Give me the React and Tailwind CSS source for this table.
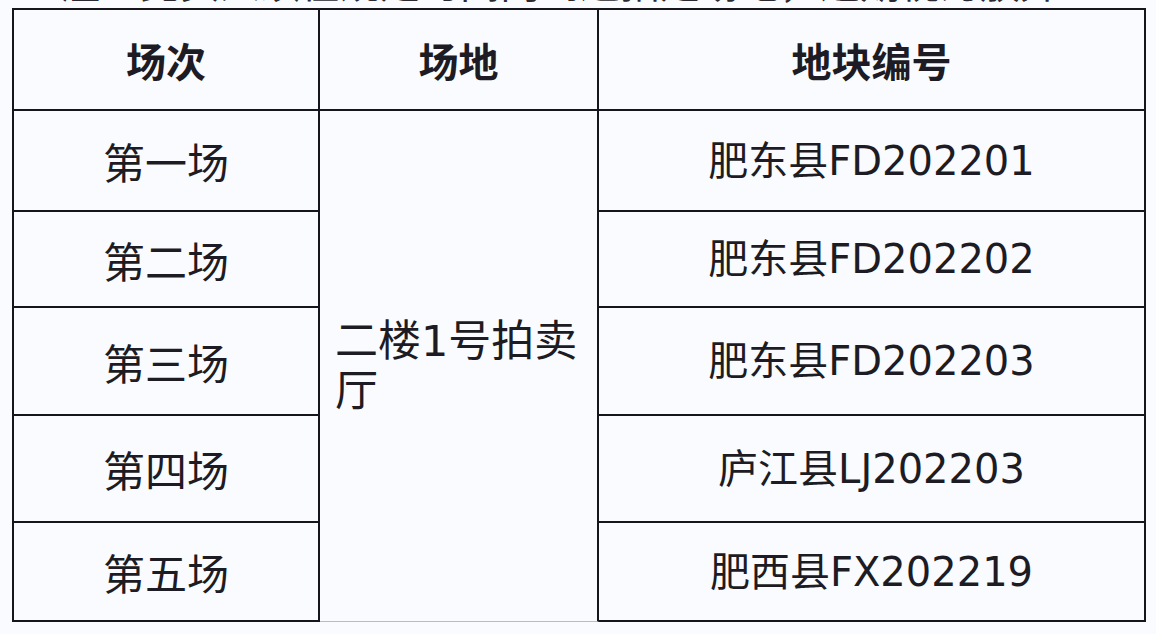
import React from 'react';

const rows = [
    { name: '第一场', code: '肥东县FD202201', h: 'h-[101px]' },
    { name: '第二场', code: '肥东县FD202202', h: 'h-[96px]' },
    { name: '第三场', code: '肥东县FD202203', h: 'h-[108px]' },
    { name: '第四场', code: '庐江县LJ202203', h: 'h-[107px]' },
    { name: '第五场', code: '肥西县FX202219', h: 'h-[99px]' },
];

const font = { fontFamily: '"DejaVu Sans", "Noto Sans CJK SC", sans-serif' };
const cjk = { fontFamily: '"Noto Sans CJK SC", sans-serif' };

const App = () => {
    return (
        <div className="w-[1156px] h-[634px] overflow-hidden bg-[#f9fbfe] text-[#1d1b23]" style={font}>
            {/* bottom edge of the paragraph above, cut off by the crop */}
            <div className="h-2 overflow-hidden" style={cjk}>
                <div className="-mt-[39px] pl-[60px] text-[40px] leading-[40px] whitespace-nowrap text-[#2a2830]">
                    注：竞买人须在规定时间内到达指定场地，逾期视为放弃
                </div>
            </div>

            <div className="ml-3 w-[1134px] border-l-2 border-t-2 border-[#16141c]">
                <div className="grid grid-cols-[306px_279px_547px]" style={cjk}>
                    {/* Header */}
                    <div className="h-[101px] flex items-center justify-center border-r-2 border-b-2 border-[#16141c] text-[40px] font-bold">场次</div>
                    <div className="h-[101px] flex items-center justify-center border-r-2 border-b-2 border-[#16141c] text-[40px] font-bold">场地</div>
                    <div className="h-[101px] flex items-center justify-center border-r-2 border-b-2 border-[#16141c] text-[40px] font-bold">地块编号</div>

                    {/* Left column */}
                    <div className="col-start-1 row-start-2 row-span-5 flex flex-col">
                        {rows.map(r => (
                            <div key={r.name} className={`${r.h} flex items-center justify-center border-r-2 border-b-2 border-[#16141c] text-[42px]`}>
                                {r.name}
                            </div>
                        ))}
                    </div>

                    {/* Venue, spans all rows */}
                    <div className="col-start-2 row-start-2 row-span-5 flex items-center pl-[15px] pr-2 border-r-2 border-b border-r-[#16141c] border-b-[#b9bcc2] text-[43px] leading-[50px]" style={font}>
                        二楼1号拍卖厅
                    </div>

                    {/* Right column */}
                    <div className="col-start-3 row-start-2 row-span-5 flex flex-col" style={font}>
                        {rows.map(r => (
                            <div key={r.code} className={`${r.h} flex items-center justify-center border-r-2 border-b-2 border-[#16141c] text-[40px]`}>
                                {r.code}
                            </div>
                        ))}
                    </div>
                </div>
            </div>
        </div>
    );
};

export default App;
